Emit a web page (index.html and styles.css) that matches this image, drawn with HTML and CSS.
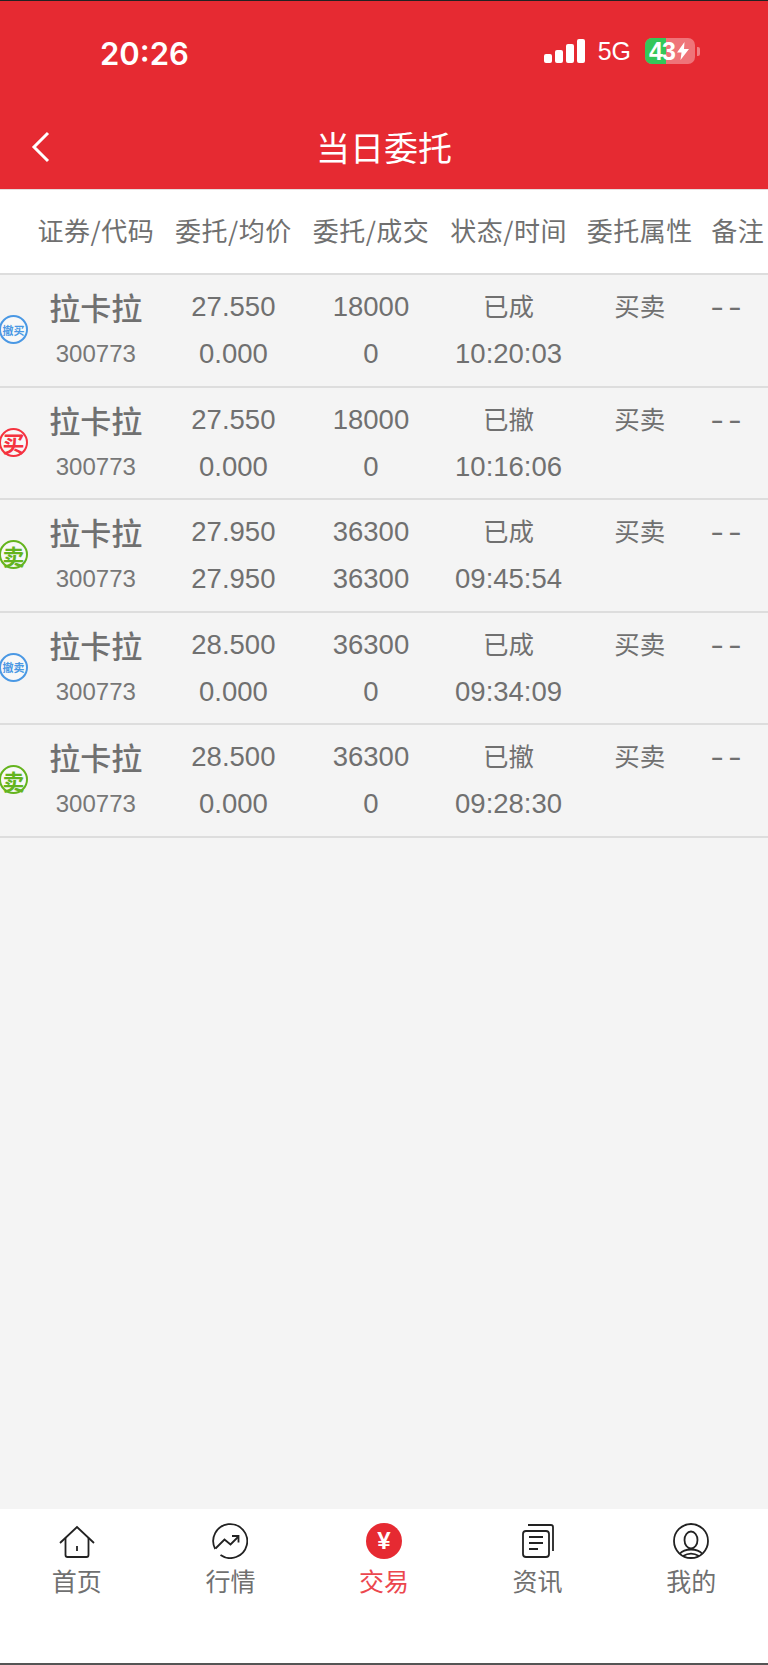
FILE: index.html
```html
<!DOCTYPE html>
<html lang="zh-CN">
<head>
    <meta charset="UTF-8">
    <meta name="viewport" content="width=device-width, initial-scale=1.0">
    <title>当日委托</title>
    <link rel="stylesheet" href="styles.css">
</head>
<body>
<div class="page">
    <header class="top">
        <div class="status-bar">
            <span class="clock">20:26</span>
            <div class="status-right">
                <div class="signal"><i class="b1"></i><i class="b2"></i><i class="b3"></i><i class="b4"></i></div>
                <span class="net">5G</span>
                <div class="battery">
                    <span class="battery-fill"></span>
                    <span class="battery-text">43</span>
                    <svg class="bolt" width="12" height="18" viewBox="0 0 12 18"><path d="M7.5 0 0 10.5h4.5L3.5 18 12 7H7z" fill="#fff"/></svg>
                </div>
                <span class="battery-nub"></span>
            </div>
        </div>
        <div class="nav">
            <svg class="back" width="20" height="32" viewBox="0 0 20 32"><path d="M17 2 3 16l14 14" fill="none" stroke="#fff" stroke-width="3"/></svg>
            <h1>当日委托</h1>
        </div>
    </header>

    <div class="table-head">
        <div class="th">证券/代码</div>
        <div class="th">委托/均价</div>
        <div class="th">委托/成交</div>
        <div class="th">状态/时间</div>
        <div class="th">委托属性</div>
        <div class="th">备注</div>
    </div>

    <main class="list">
        <div class="row">
            <span class="tag tag-cancel">撤买</span>
            <div class="cell"><b class="name">拉卡拉</b><span class="code">300773</span></div>
            <div class="cell"><span>27.550</span><span>0.000</span></div>
            <div class="cell"><span>18000</span><span>0</span></div>
            <div class="cell"><span class="word">已成</span><span>10:20:03</span></div>
            <div class="cell"><span class="word">买卖</span></div>
            <div class="cell"><span class="dash">--</span></div>
        </div>
        <div class="row">
            <span class="tag tag-buy">买</span>
            <div class="cell"><b class="name">拉卡拉</b><span class="code">300773</span></div>
            <div class="cell"><span>27.550</span><span>0.000</span></div>
            <div class="cell"><span>18000</span><span>0</span></div>
            <div class="cell"><span class="word">已撤</span><span>10:16:06</span></div>
            <div class="cell"><span class="word">买卖</span></div>
            <div class="cell"><span class="dash">--</span></div>
        </div>
        <div class="row">
            <span class="tag tag-sell">卖</span>
            <div class="cell"><b class="name">拉卡拉</b><span class="code">300773</span></div>
            <div class="cell"><span>27.950</span><span>27.950</span></div>
            <div class="cell"><span>36300</span><span>36300</span></div>
            <div class="cell"><span class="word">已成</span><span>09:45:54</span></div>
            <div class="cell"><span class="word">买卖</span></div>
            <div class="cell"><span class="dash">--</span></div>
        </div>
        <div class="row">
            <span class="tag tag-cancel">撤卖</span>
            <div class="cell"><b class="name">拉卡拉</b><span class="code">300773</span></div>
            <div class="cell"><span>28.500</span><span>0.000</span></div>
            <div class="cell"><span>36300</span><span>0</span></div>
            <div class="cell"><span class="word">已成</span><span>09:34:09</span></div>
            <div class="cell"><span class="word">买卖</span></div>
            <div class="cell"><span class="dash">--</span></div>
        </div>
        <div class="row">
            <span class="tag tag-sell">卖</span>
            <div class="cell"><b class="name">拉卡拉</b><span class="code">300773</span></div>
            <div class="cell"><span>28.500</span><span>0.000</span></div>
            <div class="cell"><span>36300</span><span>0</span></div>
            <div class="cell"><span class="word">已撤</span><span>09:28:30</span></div>
            <div class="cell"><span class="word">买卖</span></div>
            <div class="cell"><span class="dash">--</span></div>
        </div>
    </main>

    <nav class="tabs">
        <a class="tab">
            <svg width="36" height="36" viewBox="0 0 36 36" fill="none" stroke="#222" stroke-width="1.8"><path d="M1 20 18 4l17 16"/><path d="M6.500 15v17a2 2 0 0 0 2 2h19a2 2 0 0 0 2-2V15"/><path d="M18 23v5"/></svg>
            <span>首页</span>
        </a>
        <a class="tab">
            <svg width="36" height="36" viewBox="0 0 36 36" fill="none" stroke="#222" stroke-width="1.8"><path d="M3.200 26A17 17 0 1 1 8.500 32"/><path d="M3.500 25.500l9-9 6 5 8-8"/><path d="M20 13h6.500v6.500"/></svg>
            <span>行情</span>
        </a>
        <a class="tab tab-active">
            <span class="yen">¥</span>
            <span>交易</span>
        </a>
        <a class="tab">
            <svg width="36" height="36" viewBox="0 0 36 36" fill="none" stroke="#222" stroke-width="1.8"><rect x="3" y="8" width="26" height="26" rx="3"/><path d="M8 2h23a2 2 0 0 1 2 2v24"/><path d="M9 14h14M9 20h14M9 26h9"/></svg>
            <span>资讯</span>
        </a>
        <a class="tab">
            <svg width="36" height="36" viewBox="0 0 36 36" fill="none" stroke="#222" stroke-width="1.8"><circle cx="18" cy="18" r="17"/><ellipse cx="18" cy="17" rx="6.500" ry="8.500"/><path d="M6.500 31C10 27 14 26.500 18 26.500S26 27 29.500 31M10 33c5-3 11-3 16 0"/></svg>
            <span>我的</span>
        </a>
    </nav>
</div>
</body>
</html>
```

FILE: styles.css
```css
* {
    box-sizing: border-box;
}
body {
    margin: 0;
    font-family: "Liberation Sans", "Noto Sans CJK SC", sans-serif;
    color: #707070;
}
.page {
    display: flex;
    flex-direction: column;
    width: 768px;
    height: 1665px;
    background-color: #f4f4f4;
    border-bottom: 2px solid #555;
    overflow: hidden;
}

/* Red header */
.top {
    height: 190px;
    background-color: #e62a32;
    border-top: 1px solid #222;
    border-bottom: 1px solid #e4dcdc;
    color: #fff;
}
.status-bar {
    display: flex;
    justify-content: space-between;
    align-items: center;
    height: 78px;
    padding: 22px 68px 0 100px;
}
.clock {
    margin-top: 4px;
    font-family: Inter, sans-serif;
    font-size: 31px;
    font-weight: 600;
}
.status-right {
    display: flex;
    align-items: center;
}
.signal {
    display: flex;
    align-items: flex-end;
    gap: 3.5px;
    height: 24px;
}
.signal i {
    width: 7.5px;
    border-radius: 2px;
    background-color: #fff;
}
.b1 { height: 9px; }
.b2 { height: 13px; }
.b3 { height: 19px; }
.b4 { height: 24px; }
.net {
    margin: 0 14px 0 13px;
    font-size: 25px;
}
.battery {
    position: relative;
    display: flex;
    align-items: center;
    width: 50px;
    height: 26px;
    padding-left: 4px;
    border-radius: 7px;
    background-color: rgba(255, 255, 255, 0.35);
    overflow: hidden;
}
.battery-fill {
    position: absolute;
    top: 0;
    left: 0;
    width: 21px;
    height: 26px;
    background-color: #34c759;
}
.battery-text {
    position: relative;
    font-size: 25px;
    font-weight: 700;
    letter-spacing: -1px;
}
.bolt {
    position: relative;
    margin-left: 2px;
}
.battery-nub {
    width: 3px;
    height: 9px;
    margin-left: 2px;
    border-radius: 0 2px 2px 0;
    background-color: rgba(255, 255, 255, 0.4);
}
.nav {
    position: relative;
    display: flex;
    justify-content: center;
    align-items: center;
    height: 110px;
    padding-top: 24px;
}
.nav h1 {
    margin: 0;
    font-size: 34px;
    font-weight: 400;
}
.back {
    position: absolute;
    left: 31px;
    top: 52px;
}

/* Table */
.table-head {
    display: grid;
    grid-template-columns: repeat(4, 137.6px) 125px 71px;
    align-items: center;
    height: 83px;
    padding-bottom: 4px;
    padding-left: 27px;
    background-color: #fff;
}
.th {
    text-align: center;
    font-family: "Noto Sans CJK SC", sans-serif;
    font-size: 26px;
    letter-spacing: 0.5px;
    white-space: nowrap;
}
.list {
    flex: 1;
    border-top: 2px solid #ddd;
}
.row {
    display: grid;
    grid-template-columns: 27px repeat(4, 137.6px) 125px 71px;
    align-items: start;
    height: 112.6px;
    border-bottom: 2px solid #ddd;
}
.cell {
    display: flex;
    flex-direction: column;
    align-items: center;
    gap: 13px;
    padding-top: 15px;
    font-size: 27.5px;
    line-height: 34px;
    white-space: nowrap;
}
.word {
    font-size: 25.5px;
}
.name {
    margin-top: 2px;
    font-size: 31px;
    font-weight: 500;
    line-height: 36px;
}
.code {
    margin-top: -4px;
    font-size: 24px;
    color: #777;
}
.dash {
    margin-right: 20px;
    transform: scaleX(1.45);
    letter-spacing: 3px;
}
.tag {
    display: flex;
    justify-content: center;
    align-items: center;
    width: 29px;
    height: 29px;
    margin: 40px 0 0 -1px;
    border: 2px solid;
    border-radius: 50%;
    background-color: #f8f8f8;
    font-weight: 700;
    white-space: nowrap;
}
.tag-cancel {
    color: #4a98e4;
    font-size: 11px;
}
.tag-buy {
    color: #f5333f;
    font-size: 22px;
}
.tag-sell {
    color: #64b41e;
    font-size: 22px;
}

/* Bottom tabs */
.tabs {
    display: grid;
    grid-template-columns: repeat(5, 1fr);
    height: 154px;
    background-color: #fff;
}
.tab {
    display: flex;
    flex-direction: column;
    align-items: center;
    gap: 5px;
    padding-top: 14px;
    font-size: 25px;
    line-height: 36px;
}
.tab svg {
    display: block;
}
.tab-active {
    color: #ec474e;
}
.yen {
    display: flex;
    justify-content: center;
    align-items: center;
    width: 36px;
    height: 36px;
    border-radius: 50%;
    background-color: #e62a32;
    color: #fff;
    font-size: 24px;
    font-weight: 700;
}
```
